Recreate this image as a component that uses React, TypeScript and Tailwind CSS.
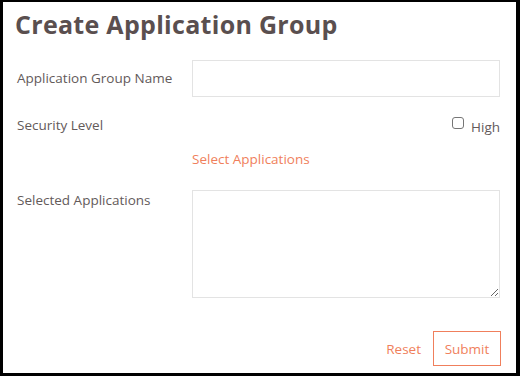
const font = { fontFamily: '"Open Sans", "Noto Sans", sans-serif' };

const Label: React.FC<{ children: React.ReactNode }> = ({ children }) => (
  <div className="w-[175px] shrink-0 text-[13.5px] text-[#635a5a]">{children}</div>
);

export default function App() {
  return (
    <div
      style={font}
      className="w-[520px] h-[376px] bg-white border-l-[3px] border-t-2 border-r-4 border-b-[3px] border-black px-[14px] pt-[4px]"
    >
      <h1 className="-ml-[2px] text-[25px] font-bold text-[#5a4f4f] leading-[36px] tracking-[0.3px]">
        Create Application Group
      </h1>

      <form className="mt-[18px]">
        <div className="flex items-center">
          <Label>Application Group Name</Label>
          <input className="h-[37px] w-[308px] border border-[#e3e3e3] outline-none px-2" />
        </div>

        <div className="flex items-start mt-[18px]">
          <Label>Security Level</Label>
          <div className="flex-1 flex justify-end items-start gap-[7px] -mt-[1px] pr-[2px]">
            <span className="mt-[3px] w-[12px] h-[12px] border border-[#767676] rounded-[3px]" />
            <span className="text-[13.5px] text-[#635a5a] mt-[3px]">High</span>
          </div>
        </div>

        <div className="pl-[175px] mt-[9px]">
          <a className="text-[13.5px] text-[#f07f5c] cursor-pointer">Select Applications</a>
        </div>

        <div className="flex items-start mt-[20px]">
          <Label>Selected Applications</Label>
          <textarea className="h-[108px] w-[308px] border border-[#e3e3e3] outline-none resize-y" />
        </div>

        <div className="flex justify-end items-center gap-[12px] mt-[33px] pr-[1px]">
          <button type="button" className="text-[13.5px] text-[#f07f5c]">
            Reset
          </button>
          <button
            type="button"
            className="h-[35px] w-[68px] border border-[#f07f5c] text-[13.5px] text-[#f07f5c]"
          >
            Submit
          </button>
        </div>
      </form>
    </div>
  );
}
